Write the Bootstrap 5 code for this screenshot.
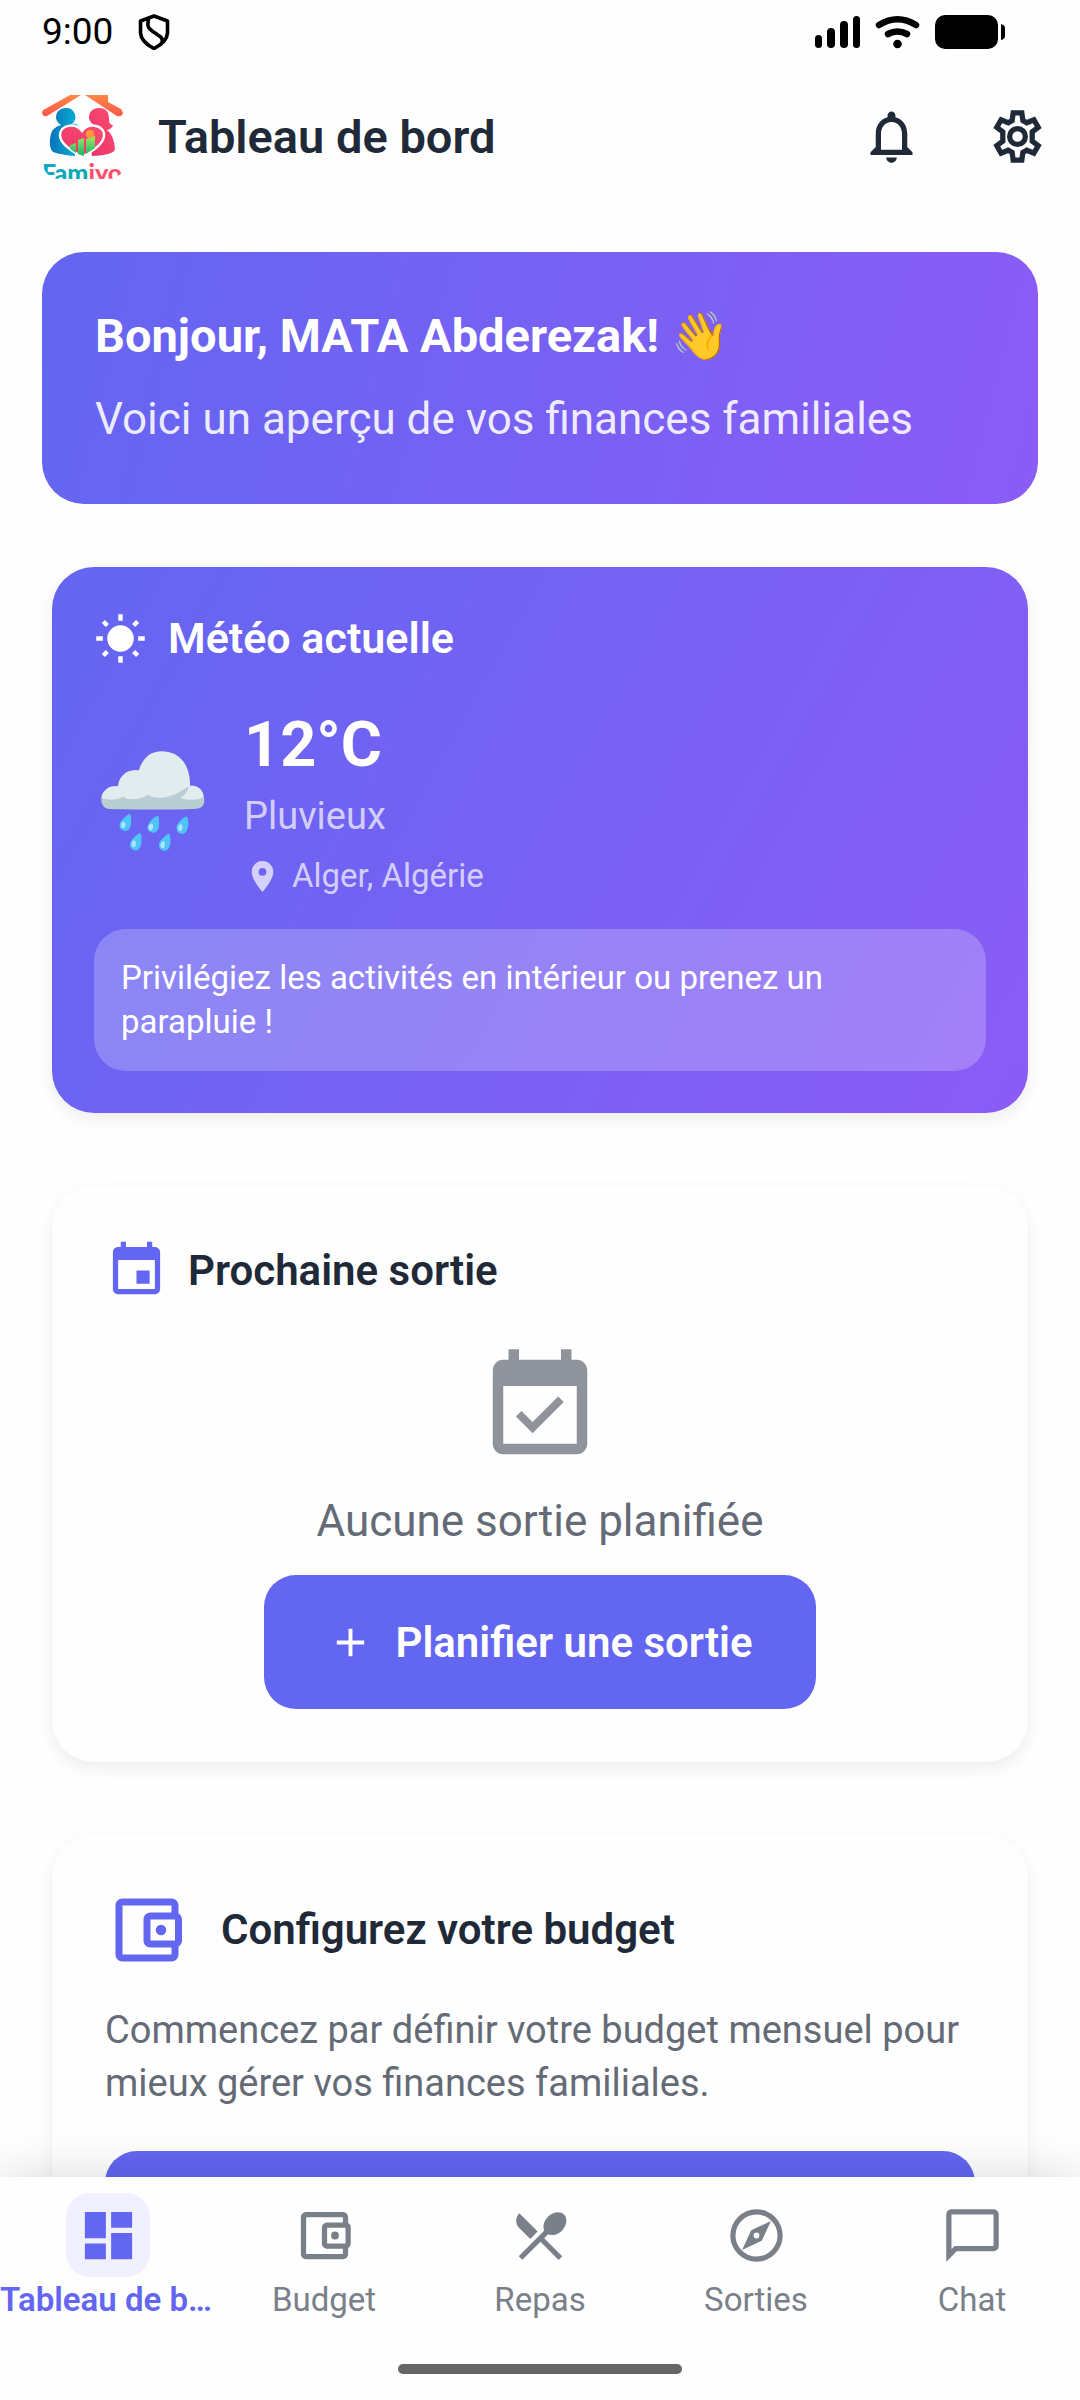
<!DOCTYPE html>
<html lang="fr">
<head>
<meta charset="utf-8">
<meta name="viewport" content="width=device-width, initial-scale=1">
<title>Tableau de bord</title>
<link href="https://cdn.jsdelivr.net/npm/bootstrap@5.3.0/dist/css/bootstrap.min.css" rel="stylesheet">
<style>
  :root { --brand: #6366f1; --ink: #1f2937; --soft: #646b76; --tab: #7a8089; }
  body { font-family: Roboto, "Noto Sans", sans-serif; background: #fefefe; color: var(--ink); }
  svg { display: block; flex: none; fill: currentColor; }
  .status-bar { height: 63px; padding: 0 75px 0 42px; color: #000; font-size: 37px; line-height: 41px; }
  .top-bar { height: 147px; padding-left: 42px; }
  .top-bar h1 { font-size: 47px; line-height: 62px; margin-left: 32px; font-weight: 600; }
  .icon-btn { width: 126px; height: 126px; color: var(--ink); border: 0; }
  .feed { min-height: 0; padding: 42px 42px 0; scrollbar-width: none; }
  .hero { background: linear-gradient(104deg, var(--brand), #8b5cf6); color: #fff; border-radius: 42px; padding: 53px; margin-bottom: 63px; }
  .hero h2 { font-size: 47px; line-height: 62px; margin-bottom: 20px; font-weight: 700; }
  .hero p { font-size: 44px; line-height: 64px; color: rgba(255,255,255,.88); }
  .panel { border: 0; border-radius: 42px; margin: 0 10px 73px; background: #fefefe; box-shadow: 0 6px 16px rgba(0,0,0,.07); color: var(--ink); padding: 53px; }
  .panel h2 { font-size: 42px; line-height: 58px; font-weight: 600; }
  .weather { background: linear-gradient(119deg, var(--brand), #8b5cf6); color: #fff; padding: 42px; }
  .weather-title { gap: 21px; }
  .weather-title h2 { font-size: 43px; }
  .weather-now { margin-top: 37px; gap: 32px; }
  .emoji { font-size: 94px; line-height: 98px; width: 118px; }
  .temp { font-size: 63px; line-height: 82px; font-weight: 700; }
  .sky { font-size: 38px; line-height: 53px; margin: 4px 0 11px; color: rgba(255,255,255,.7); }
  .place { font-size: 33px; line-height: 44px; gap: 11px; color: rgba(255,255,255,.7); }
  .advice { background: rgba(255,255,255,.22); border-radius: 32px; padding: 27px; margin-top: 31px; font-size: 33px; line-height: 44px; }
  .empty-icon { color: #8f949c; margin-top: 42px; }
  .empty-text { font-size: 44px; line-height: 63px; margin: 20px 0 22px; color: var(--soft); }
  .btn-brand { --bs-btn-color: #fff; --bs-btn-bg: var(--brand); --bs-btn-hover-color: #fff; --bs-btn-hover-bg: #4f52e0; --bs-btn-active-bg: #4f52e0; --bs-btn-active-color: #fff; border: 0; border-radius: 32px; height: 134px; padding: 0 63px; gap: 21px; font-size: 42px; font-weight: 600; }
  .budget-text { font-size: 38px; line-height: 53px; color: var(--soft); margin: 32px 0 41px; }
  .tab-bar { background: #fefefe; box-shadow: 0 0 44px rgba(0,0,0,.15); padding: 16px 0 26px; z-index: 2; }
  .tab-bar a { flex: 1 1 0; min-width: 0; color: var(--tab); font-size: 33px; line-height: 44px; text-decoration: none; text-align: center; }
  .tab-bar a.active { color: var(--brand); font-weight: 600; }
  .pill { width: 84px; height: 84px; border-radius: 24px; margin: 0 auto 1px; }
  .active .pill { background: #f0f0fe; }
  .home-bar { width: 284px; height: 10px; border-radius: 5px; background: #666; margin: 42px auto 0; }
</style>
</head>
<body>
<div class="d-flex flex-column vh-100 overflow-hidden">
  <div class="status-bar d-flex align-items-center flex-shrink-0">
    <span>9:00</span>
    <svg class="ms-4" width="34" height="36" viewBox="0 0 34 36" fill="none"><path d="M17 2 3.500 7V19C4 26 10 31 17 34.500C24 31 30 26 30.500 19V7ZM12 4C9 13 12 15 18 19C24 23 26 24 25 28" fill="none" stroke="#000" stroke-width="3.600" stroke-linejoin="round"/></svg>
    <svg class="ms-auto" width="190" height="36" viewBox="815 13 190 36"><rect x="815" y="34" width="7" height="13" rx="3.500"/><rect x="827" y="27" width="8" height="20" rx="4"/><rect x="840" y="20" width="8" height="27" rx="4"/><rect x="853" y="15" width="7" height="32" rx="3.500"/><g fill="none" stroke="#000" stroke-width="6.500" stroke-linecap="round"><path d="M879 24Q897.500 12.500 916 24M888 33Q897.500 28 907 33"/></g><circle cx="897.500" cy="43" r="4.300"/><rect x="935" y="14" width="63" height="34" rx="10"/><path d="M1001 23q4 1 4 4v8q0 3-4 4z"/></svg>
  </div>
  <header class="top-bar d-flex align-items-center flex-shrink-0">
    <svg width="84" height="84" viewBox="0 0 84 84" role="img" aria-label="Famiyo">
      <defs>
        <clipPath id="logoClip"><rect width="84" height="84" rx="18"/></clipPath>
        <linearGradient id="roof" x1="0" y1="1" x2="0" y2="0"><stop stop-color="#ff5548"/><stop offset="1" stop-color="#ff8746"/></linearGradient>
        <linearGradient id="blue"><stop stop-color="#0a72bd"/><stop offset="1" stop-color="#06b4d2"/></linearGradient>
        <linearGradient id="pink" x1="1" y1="0" x2="0" y2="1"><stop stop-color="#ff4e70"/><stop offset="1" stop-color="#e8316a"/></linearGradient>
        <linearGradient id="green" x1="0" y1="0" x2="0" y2="1"><stop stop-color="#a4e860"/><stop offset="1" stop-color="#16b46c"/></linearGradient>
        <linearGradient id="word" gradientUnits="userSpaceOnUse" x1="0" y1="0" x2="84" y2="0"><stop stop-color="#15a8c4"/><stop offset=".54" stop-color="#0aa9ae"/><stop offset=".55" stop-color="#ff4f72"/><stop offset="1" stop-color="#ff4f62"/></linearGradient>
      </defs>
      <path fill="url(#roof)" d="M28 0H39L5 21Q1 22 0 18Q0 15 3 14ZM43 0H66V7L79 14Q82 18 80 20Q78 22 75 21Z"/>
      <g clip-path="url(#logoClip)">
        <path fill="url(#blue)" d="M24 13A9 9 0 0 1 30 29Q36 28 37 33L30 40 33 61Q20 60 11 57Q7 53 8 44Q9 32 19 30A9 9 0 0 1 24 13Z"/>
        <path fill="url(#pink)" d="M57 13Q67 13 67 24Q67 30 71 30Q70 34 65 35Q72 40 73 54Q72 60 50 61L46 36Q47 29 52 30A9 9 0 0 1 57 13Z"/>
        <path fill="url(#pink)" stroke="#fff" stroke-width="2.500" d="M40 62C29 55 18 49 18 40C18 30 33 27 40 36C47 27 63 30 62 41C61 50 50 56 40 62Z"/>
        <path fill="url(#green)" d="M28 50L34 48V58L28 54ZM36 45L42 43V61L36 59ZM44 44L53 41V53L44 59Z"/>
        <circle cx="48" cy="39" r="4.300" fill="#ff9838"/>
        <text x="0" y="87" font-family="Lato, sans-serif" font-size="25" font-weight="900" fill="url(#word)">Famiyo</text>
      </g>
    </svg>
    <h1 class="mb-0">Tableau de bord</h1>
    <div class="d-flex ms-auto">
      <button class="icon-btn btn p-0 d-flex align-items-center justify-content-center" aria-label="Notifications"><svg width="63" height="63" viewBox="0 0 24 24"><path d="M12 22c1.100 0 2-.9 2-2h-4c0 1.100.9 2 2 2zm6-6v-5c0-3.070-1.630-5.640-4.500-6.320V4c0-.83-.67-1.500-1.500-1.500s-1.500.67-1.500 1.500v.68C7.640 5.360 6 7.920 6 11v5l-2 2v1h16v-1l-2-2zm-2 1H8v-6c0-2.480 1.510-4.500 4-4.500s4 2.020 4 4.500v6z"/></svg></button>
      <button class="icon-btn btn p-0 d-flex align-items-center justify-content-center" aria-label="Paramètres"><svg width="63" height="63" viewBox="0 0 24 24" fill="none"><path fill="none" stroke="currentColor" stroke-width="2" d="M10.350 3h3.300l.4 2.900 1.500.85 2.700-1.100 1.650 2.850-2.300 1.750v3.500l2.300 1.750-1.650 2.850-2.700-1.100-1.500.85-.4 2.900h-3.300l-.4-2.900-1.500-.85-2.700 1.100L4.100 15.500l2.300-1.750v-3.500L4.100 8.500l1.650-2.850 2.700 1.100 1.500-.85z"/><circle cx="12" cy="12" r="3" fill="none" stroke="currentColor" stroke-width="2"/></svg></button>
    </div>
  </header>

  <main class="feed flex-grow-1 overflow-auto">
    <section class="hero">
      <h2>Bonjour, MATA Abderezak! 👋</h2>
      <p class="mb-0">Voici un aperçu de vos finances familiales</p>
    </section>

    <section class="panel weather card">
      <div class="weather-title d-flex align-items-center">
        <svg width="53" height="53" viewBox="0 0 24 24"><circle cx="12" cy="12" r="6"/><path d="M11 1h2v3h-2zM11 20h2v3h-2zM1 11h3v2H1zM20 11h3v2h-3zM3.550 5l1.400-1.400 1.800 1.800-1.400 1.400zM17.250 5.400l1.800-1.800L20.450 5l-1.800 1.800zM3.550 19l1.800-1.800 1.400 1.400-1.800 1.800zM17.250 18.600l1.400-1.400 1.800 1.800-1.400 1.400z"/></svg>
        <h2 class="mb-0">Météo actuelle</h2>
      </div>
      <div class="weather-now d-flex align-items-center">
        <div class="emoji">🌧️</div>
        <div>
          <div class="temp">12°C</div>
          <div class="sky">Pluvieux</div>
          <div class="place d-flex align-items-center">
            <svg width="37" height="37" viewBox="0 0 24 24"><path d="M12 2C8.130 2 5 5.130 5 9c0 5.250 7 13 7 13s7-7.750 7-13c0-3.870-3.130-7-7-7zm0 9.500a2.500 2.500 0 0 1 0-5 2.500 2.500 0 0 1 0 5z"/></svg>
            <span>Alger, Algérie</span>
          </div>
        </div>
      </div>
      <div class="advice">Privilégiez les activités en intérieur ou prenez un<br>parapluie !</div>
    </section>

    <section class="panel card">
      <div class="d-flex align-items-center">
        <svg class="me-3" width="63" height="63" viewBox="0 0 24 24" color="#6366f1"><path d="M17 12h-5v5h5v-5zM16 1v2H8V1H6v2H5c-1.110 0-1.990.9-1.990 2L3 19c0 1.100.89 2 2 2h14c1.100 0 2-.9 2-2V5c0-1.100-.9-2-2-2h-1V1h-2zm3 18H5V8h14v11z"/></svg>
        <h2 class="mb-0 ms-1">Prochaine sortie</h2>
      </div>
      <div class="d-flex flex-column align-items-center">
        <svg class="empty-icon" width="126" height="126" viewBox="0 0 24 24"><path d="M16.530 11.060l-1.060-1.060-4.880 4.880-2.120-2.120-1.060 1.060L10.590 17l5.940-5.940zM19 3h-1V1h-2v2H8V1H6v2H5c-1.110 0-1.990.9-1.990 2L3 19c0 1.100.89 2 2 2h14c1.100 0 2-.9 2-2V5c0-1.100-.9-2-2-2zm0 16H5V8h14v11z"/></svg>
        <p class="empty-text">Aucune sortie planifiée</p>
        <button class="btn btn-brand d-flex align-items-center"><svg width="47" height="47" viewBox="0 0 24 24"><path d="M19 13h-6v6h-2v-6H5v-2h6V5h2v6h6v2z"/></svg>Planifier une sortie</button>
      </div>
    </section>

    <section class="panel card">
      <div class="d-flex align-items-center">
        <svg width="84" height="84" viewBox="0 0 24 24" color="#6366f1"><use href="#wallet"/></svg>
        <h2 class="mb-0 ms-4 ps-2">Configurez votre budget</h2>
      </div>
      <p class="budget-text">Commencez par définir votre budget mensuel pour mieux gérer vos finances familiales.</p>
      <button class="btn btn-brand w-100" aria-label="Configurer le budget"></button>
    </section>
  </main>

  <nav class="tab-bar position-relative flex-shrink-0">
    <div class="d-flex">
      <a href="#" class="active" aria-current="page"><div class="pill d-flex align-items-center justify-content-center"><svg width="63" height="63" viewBox="0 0 24 24"><path d="M3 13h8V3H3v10zm0 8h8v-6H3v6zm10 0h8V11h-8v10zm0-18v6h8V3h-8z"/></svg></div><div class="text-truncate">Tableau de bord</div></a>
      <a href="#"><div class="pill d-flex align-items-center justify-content-center"><svg width="63" height="63" viewBox="0 0 24 24"><path id="wallet" d="M21 7.280V5c0-1.100-.9-2-2-2H5c-1.110 0-2 .9-2 2v14c0 1.100.89 2 2 2h14c1.100 0 2-.9 2-2v-2.280c.59-.35 1-.98 1-1.720V9c0-.74-.41-1.370-1-1.720zM20 9v6h-7V9h7zM5 19V5h14v2h-6c-1.100 0-2 .9-2 2v6c0 1.100.9 2 2 2h6v2H5zM16 10.500a1.500 1.500 0 1 0 0 3 1.500 1.500 0 1 0 0-3z"/></svg></div>Budget</a>
      <a href="#"><div class="pill d-flex align-items-center justify-content-center"><svg width="63" height="63" viewBox="0 0 24 24"><path d="M8.100 13.340l2.830-2.830L3.910 3.500c-1.560 1.560-1.560 4.090 0 5.660l4.190 4.180zm6.780-1.810c1.530.71 3.680.21 5.270-1.380 1.910-1.910 2.280-4.650.81-6.120-1.460-1.460-4.200-1.100-6.120.81-1.590 1.590-2.090 3.740-1.380 5.270L3.700 19.870l1.410 1.410L12 14.410l6.880 6.880 1.410-1.410L13.410 13l1.470-1.470z"/></svg></div>Repas</a>
      <a href="#"><div class="pill d-flex align-items-center justify-content-center"><svg width="63" height="63" viewBox="0 0 24 24"><path d="M12 10.900c-.61 0-1.100.49-1.100 1.100s.49 1.100 1.100 1.100 1.100-.49 1.100-1.100-.49-1.100-1.100-1.100zM12 2C6.480 2 2 6.480 2 12s4.480 10 10 10 10-4.480 10-10S17.520 2 12 2zm2.190 12.190L6 18l3.810-8.190L18 6l-3.810 8.190z" fill="none"/><path fill-rule="evenodd" d="M12 2a10 10 0 1 0 0 20 10 10 0 1 0 0-20zM12 4a8 8 0 1 1 0 16 8 8 0 1 1 0-16z"/><path fill-rule="evenodd" d="M6.500 17.500l3.500-7.500 7.500-3.500-3.500 7.500zM12 10.900a1.100 1.100 0 1 0 0 2.200 1.100 1.100 0 1 0 0-2.200z"/></svg></div>Sorties</a>
      <a href="#"><div class="pill d-flex align-items-center justify-content-center"><svg width="63" height="63" viewBox="0 0 24 24"><path d="M20 2H4c-1.100 0-2 .9-2 2v18l4-4h14c1.100 0 2-.9 2-2V4c0-1.100-.9-2-2-2zm0 14H5.170L4 17.170V4h16v12z"/></svg></div>Chat</a>
    </div>
    <div class="home-bar"></div>
  </nav>
</div>
<script src="https://cdn.jsdelivr.net/npm/bootstrap@5.3.0/dist/js/bootstrap.bundle.min.js"></script>
</body>
</html>
